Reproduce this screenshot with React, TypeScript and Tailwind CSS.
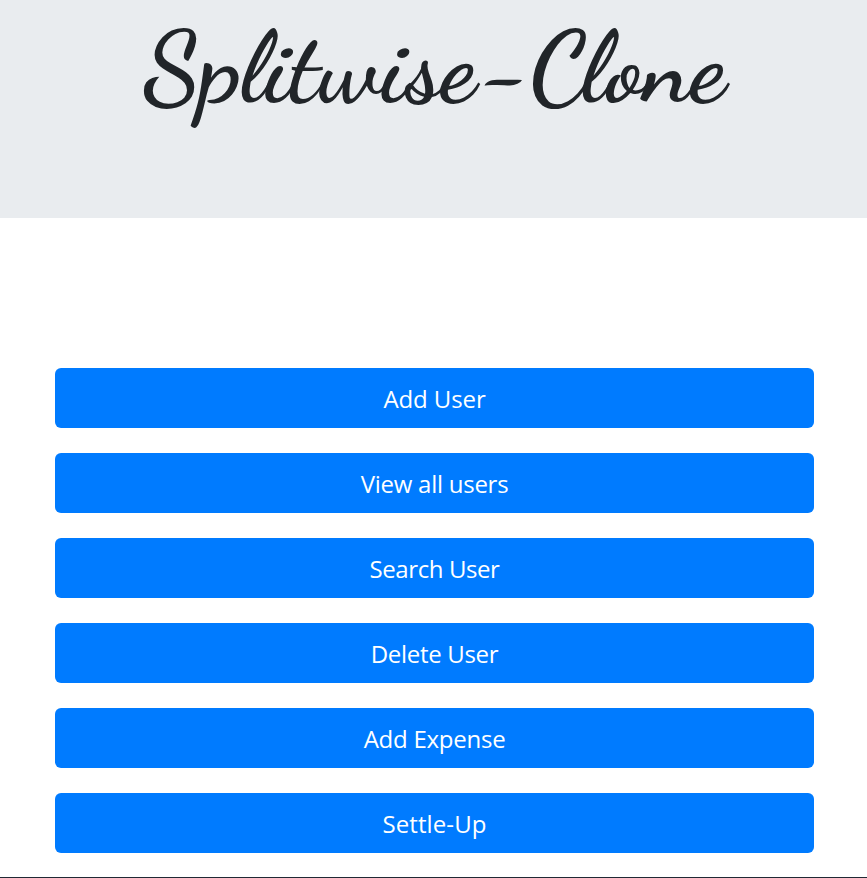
const actions = [
  { label: "Add User", tracking: "tracking-[-0.1px]" },
  { label: "View all users", tracking: "tracking-[-0.25px]" },
  { label: "Search User", tracking: "tracking-[-0.4px]" },
  { label: "Delete User", tracking: "tracking-[-0.3px]" },
  { label: "Add Expense", tracking: "tracking-[-0.25px]" },
  { label: "Settle-Up", tracking: "tracking-[0.1px]" },
];

export default function App() {
  return (
    <div className="flex h-[878px] w-full flex-col overflow-hidden bg-white">
      <header className="flex h-[218px] shrink-0 justify-center bg-[#e9ecef] pl-[2px]">
        <h1 className="mt-[8px] h-[120px] whitespace-nowrap font-['Dancing_Script',cursive] text-[100px] leading-[120px] font-bold text-[#212529]">
          Splitwise-Clone
        </h1>
      </header>
      <main className="mt-[150px] mr-[53px] ml-[55px] flex flex-col gap-[25px]">
        {actions.map(({ label, tracking }) => (
          <button
            key={label}
            type="button"
            className={`h-[60px] w-full rounded-[6px] bg-[#007bff] pt-[2px] font-['Segoe_UI','Open_Sans',sans-serif] text-[24px] leading-[36px] text-white ${tracking}`}
          >
            {label}
          </button>
        ))}
      </main>
      <footer className="mt-auto h-px shrink-0 bg-[#212934]" />
    </div>
  );
}
